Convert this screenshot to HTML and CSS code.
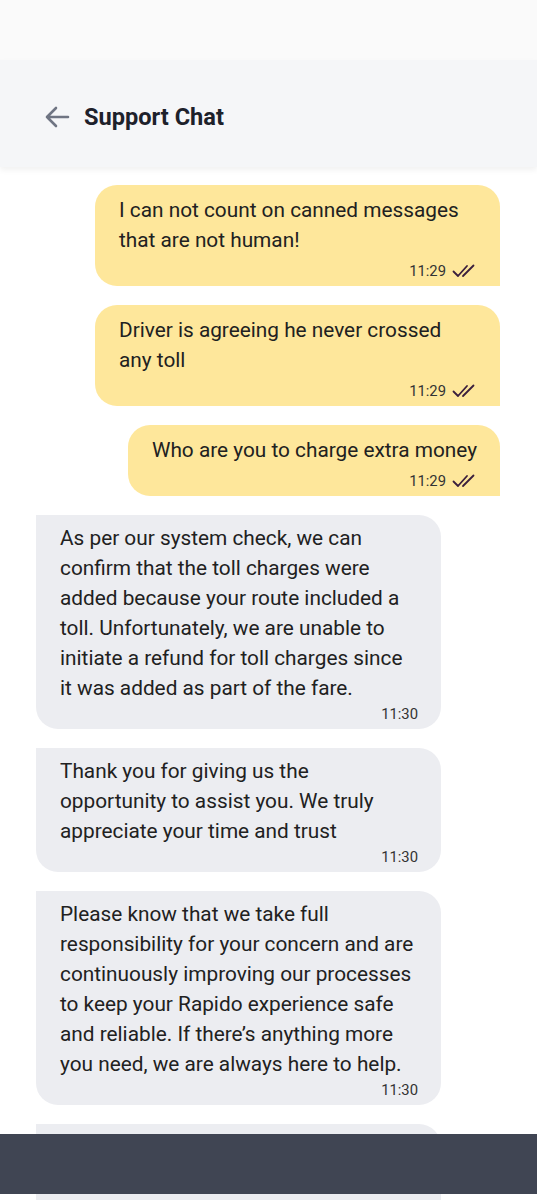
FILE: index.html
```html
<!DOCTYPE html>
<html lang="en">
<head>
  <meta charset="UTF-8" />
  <meta name="viewport" content="width=device-width, initial-scale=1.0" />
  <title>Support Chat</title>
  <link rel="stylesheet" href="styles.css">
</head>
<body>
  <div class="status-bar"></div>

  <header class="topbar">
    <svg class="back" width="26" height="24" viewBox="0 0 26 24">
      <path d="M24 12H3M12 3L3 12l9 9" fill="none" stroke="#6f7583" stroke-width="2.6" stroke-linecap="round" stroke-linejoin="round"/>
    </svg>
    <h1>Support Chat</h1>
  </header>

  <main class="chat">
    <div class="msg sent">
      <p>I can not count on canned messages that are not human!</p>
      <div class="meta">11:29
        <svg class="ticks" width="25" height="14" viewBox="0 0 25 14"><path d="M1.5 7.5l4.5 4.5L15 2M11 12L21.5 1.5" fill="none" stroke="#3b1f3d" stroke-width="1.8" stroke-linecap="round" stroke-linejoin="round"/></svg>
      </div>
    </div>

    <div class="msg sent">
      <p>Driver is agreeing he never crossed any toll</p>
      <div class="meta">11:29
        <svg class="ticks" width="25" height="14" viewBox="0 0 25 14"><path d="M1.5 7.5l4.5 4.5L15 2M11 12L21.5 1.5" fill="none" stroke="#3b1f3d" stroke-width="1.8" stroke-linecap="round" stroke-linejoin="round"/></svg>
      </div>
    </div>

    <div class="msg sent">
      <p>Who are you to charge extra money</p>
      <div class="meta">11:29
        <svg class="ticks" width="25" height="14" viewBox="0 0 25 14"><path d="M1.5 7.5l4.5 4.5L15 2M11 12L21.5 1.5" fill="none" stroke="#3b1f3d" stroke-width="1.8" stroke-linecap="round" stroke-linejoin="round"/></svg>
      </div>
    </div>

    <div class="msg received">
      <p>As per our system check, we can confirm that the toll charges were added because your route included a toll. Unfortunately, we are unable to initiate a refund for toll charges since it was added as part of the fare.</p>
      <div class="meta">11:30</div>
    </div>

    <div class="msg received">
      <p>Thank you for giving us the opportunity to assist you. We truly appreciate your time and trust</p>
      <div class="meta">11:30</div>
    </div>

    <div class="msg received">
      <p>Please know that we take full responsibility for your concern and are continuously improving our processes to keep your Rapido experience safe and reliable. If there’s anything more you need, we are always here to help.</p>
      <div class="meta">11:30</div>
    </div>

    <div class="msg received placeholder"></div>
  </main>

  <div class="nav-bar"></div>
</body>
</html>
```

FILE: styles.css
```css
:root {
  --sent: #fee79b;
  --received: #ecedf1;
  --text: #212121;
  --nav: #404553;
}
body {
  margin: 0;
  font-family: Roboto, "Noto Sans", sans-serif;
  background: #ffffff;
  color: var(--text);
  height: 1200px;
  overflow: hidden;
  position: relative;
}
.status-bar {
  height: 60px;
  background: #fafafa;
}
.topbar {
  height: 107px;
  background: #f5f6f8;
  display: flex;
  align-items: center;
  gap: 14px;
  padding: 6px 0 0 44px;
  box-sizing: border-box;
  box-shadow: 0 3px 6px rgba(0, 0, 0, 0.06);
  position: relative;
  z-index: 1;
}
.topbar h1 {
  margin: 0;
  font-size: 23.6px;
  font-weight: 700;
  color: #1d212b;
}
.back {
  display: block;
}
.chat {
  display: flex;
  flex-direction: column;
  gap: 19px;
  padding: 18px 37px 0 36px;
}
.msg {
  max-width: 405px;
  box-sizing: border-box;
  padding: 10px 23px 6px 24px;
  border-radius: 22px;
}
.msg p {
  margin: 0;
  font-size: 20.8px;
  line-height: 30px;
}
.sent {
  align-self: flex-end;
  background: var(--sent);
  border-bottom-right-radius: 0;
}
.received {
  align-self: flex-start;
  background: var(--received);
  border-top-left-radius: 0;
  padding-top: 8px;
  padding-bottom: 6px;
}
.meta {
  display: flex;
  justify-content: flex-end;
  align-items: center;
  gap: 6px;
  font-size: 14.8px;
  line-height: 18px;
  color: #333333;
  margin-top: 7px;
}
.received .meta {
  margin-top: 2px;
}
.ticks {
  display: block;
}
.placeholder {
  width: 405px;
  height: 120px;
}
.nav-bar {
  position: absolute;
  left: 0;
  right: 0;
  top: 1134px;
  height: 60px;
  background: var(--nav);
}
```
